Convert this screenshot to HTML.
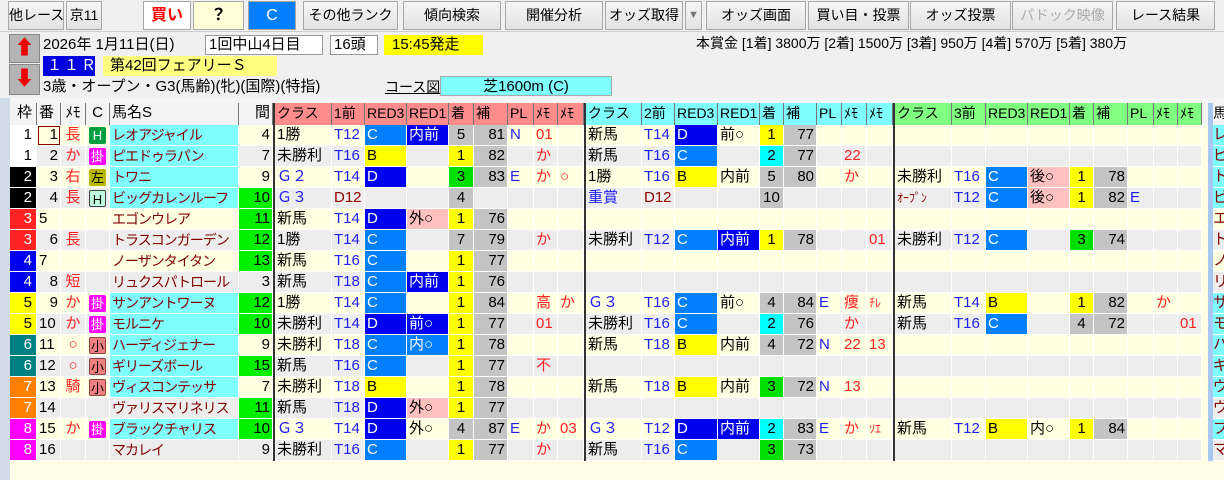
<!DOCTYPE html>
<html><head><meta charset="utf-8">
<style>
*{box-sizing:border-box;margin:0;padding:0}
body{width:1224px;height:480px;overflow:hidden;background:#f0f0f0;font-family:"Liberation Sans","Noto Sans CJK JP",sans-serif;position:relative;color:#000}
.btn{position:absolute;top:1px;height:29px;background:linear-gradient(#f6f6f6,#e2e2e2);border:1px solid #a8a8a8;font-size:14px;line-height:27px;text-align:center;white-space:nowrap}
.ab{position:absolute;white-space:nowrap}
.bx{position:absolute;height:20px;font-size:15px;line-height:20px;white-space:nowrap}
#strip{position:absolute;left:0;top:98px;width:10px;height:382px;background:#d2dce8}
#tbl{position:absolute;left:10px;top:98px;width:1214px;height:382px;background:#fffde4}
.r{display:flex;height:21px;font-size:15px;line-height:20px}
.r i{font-style:normal;display:block;height:21px;border-right:1px solid #fff;border-bottom:1px solid #fff;overflow:hidden;white-space:nowrap;padding:0 2px}
.o{background:#ffffe2}.e{background:#ededed}
.h{height:27px;padding-top:5px;background:#f4f4f4}
.h i{border-right:1px solid #777;border-bottom:none;height:22px}
.r i:nth-child(1){width:27px;text-align:right;padding-right:4px}
.r i:nth-child(2){width:24px;text-align:right}
.r i:nth-child(3){width:25px;color:#f22;text-align:center}
.r i:nth-child(4){width:24px;text-align:center}
.r i:nth-child(5){width:129px;color:#800000;font-size:14px;letter-spacing:-1px}
.r i:nth-child(6){width:34px;text-align:right}
.r i:nth-child(7),.r i:nth-child(17),.r i:nth-child(27){width:2px;background:#333;border:none;padding:0}
.r i:nth-child(8){width:57px}.r i:nth-child(9){width:33px}.r i:nth-child(10){width:42px}.r i:nth-child(11){width:42px}
.r i:nth-child(12){width:25px;text-align:center}.r i:nth-child(13){width:34px;text-align:right}.r i:nth-child(14){width:26px}
.r i:nth-child(15){width:24px;color:#f22}.r i:nth-child(16){width:26px;color:#f22}
.r i:nth-child(18){width:56px}.r i:nth-child(19){width:33px}.r i:nth-child(20){width:43px}.r i:nth-child(21){width:42px}
.r i:nth-child(22){width:24px;text-align:center}.r i:nth-child(23){width:33px;text-align:right}.r i:nth-child(24){width:25px}
.r i:nth-child(25){width:25px;color:#f22}.r i:nth-child(26){width:26px;color:#f22}
.r i:nth-child(28){width:57px}.r i:nth-child(29){width:34px}.r i:nth-child(30){width:42px}.r i:nth-child(31){width:42px}
.r i:nth-child(32){width:24px;text-align:center}.r i:nth-child(33){width:34px;text-align:right}.r i:nth-child(34){width:26px}
.r i:nth-child(35){width:24px;color:#f22}.r i:nth-child(36){width:24px;color:#f22}
.r i:nth-child(37){width:6px;border:none;background:#fffde4;padding:0}
.r i:nth-child(38){width:5px;border:none;background:#a8c8f0;padding:0}
.r i:nth-child(39){width:11px;color:#800000;border-right:none;padding:0}
.h i:nth-child(37){background:#f4f4f4}
.h i:nth-child(n+8):nth-child(-n+16){background:#ff8c8c}
.h i:nth-child(n+18):nth-child(-n+26){background:#80ffff}
.h i:nth-child(n+28):nth-child(-n+36){background:#80ff80}
.h i:nth-child(n+8){text-align:left!important;color:#000!important;font-size:14px}
.h i:nth-child(3){color:#000}
.h i:nth-child(5){color:#000;font-size:15px;letter-spacing:0}
.h i:nth-child(6){text-align:right}
.h i:nth-child(39){background:#f4f4f4;color:#000}
.r .nm{background:#80ffff}
.r .g{background:#00f000}
.r .c{background:#0080ff;color:#fff}
.r .d{background:#0000f0;color:#fff}
.r .bb{background:#ffff00}
.r .nb{background:#0000f0;color:#fff}
.r .lb{background:#0080ff;color:#fff}
.r .pk{background:#ffc0c0}
.r .y{background:#ffff00}
.r .cy{background:#00ffff}
.r .gn{background:#00e000}
.r .gy{background:#c4c4c4}
.b{color:#2020f0}.m{color:#900000!important}.rd{color:#f22}
.w1{background:#fff}.w2{background:#000;color:#fff}.w3{background:#f22;color:#fff}.w4{background:#0000f0;color:#fff}.w5{background:#ffff00}.w6{background:#008080;color:#fff}.w7{background:#ff8000;color:#fff}.w8{background:#f0f;color:#fff}
.t{display:inline-block;width:17px;height:17px;line-height:17px;font-size:13px;margin-top:2px;border-radius:2px}
.tH{background:#00a040;color:#fff}.tK{background:#f0f;color:#fff}.tL{background:#b8b800}.tH2{background:#c0ffe0;border:1px solid #444}.tS{background:#f08080;border:1px solid #844}
</style></head><body>
<div class="btn" style="left:8px;width:56px">他レース</div>
<div class="btn" style="left:66px;width:36px">京11</div>
<div class="btn" style="left:143px;width:48px;background:#fff;color:#f00;font-weight:bold;font-size:16px">買い</div>
<div class="btn" style="left:193px;width:51px;background:#ffffd8;font-weight:bold;font-size:16px">？</div>
<div class="btn" style="left:248px;width:48px;background:#0080ff;color:#fff;font-size:16px">C</div>
<div class="btn" style="left:303px;width:95px">その他ランク</div>
<div class="btn" style="left:403px;width:98px">傾向検索</div>
<div class="btn" style="left:505px;width:98px">開催分析</div>
<div class="btn" style="left:605px;width:78px">オッズ取得</div>
<div class="btn" style="left:685px;width:17px;color:#777;font-size:11px">▼</div>
<div class="btn" style="left:706px;width:100px">オッズ画面</div>
<div class="btn" style="left:808px;width:101px">買い目・投票</div>
<div class="btn" style="left:910px;width:101px">オッズ投票</div>
<div class="btn" style="left:1012px;width:101px;color:#aaa">パドック映像</div>
<div class="btn" style="left:1116px;width:99px">レース結果</div>
<div class="ab" style="left:0;top:31px;width:1224px;height:1px;background:#ccc"></div>
<div class="ab" style="left:9px;top:34px;width:31px;height:29px;background:#b4b4b4;border:1px solid #888;color:#e00;text-align:center;font-size:20px;line-height:27px">⬆</div>
<div class="ab" style="left:9px;top:64px;width:31px;height:31px;background:#b4b4b4;border:1px solid #888;color:#e00;text-align:center;font-size:20px;line-height:29px">⬇</div>
<div class="bx" style="left:43px;top:35px">2026年 1月11日(日)</div>
<div class="bx" style="left:205px;top:35px;width:118px;background:#fff;border:1px solid #999;padding-left:3px;line-height:18px">1回中山4日目</div>
<div class="bx" style="left:330px;top:35px;width:48px;background:#fff;border:1px solid #999;padding-left:3px;line-height:18px">16頭</div>
<div class="bx" style="left:384px;top:35px;width:99px;background:#ffff00;padding-left:8px">15:45発走</div>
<div class="bx" style="left:43px;top:56px;width:52px;background:#0000e0;color:#fff;padding-left:4px;letter-spacing:2px">１１Ｒ</div>
<div class="bx" style="left:103px;top:56px;width:174px;background:#ffff80;padding-left:7px">第42回フェアリーＳ</div>
<div class="bx" style="left:43px;top:77px">3歳・オープン・G3(馬齢)(牝)(国際)(特指)</div>
<div class="bx" style="left:385px;top:77px;font-size:14px;text-decoration:underline">コース図</div>
<div class="bx" style="left:440px;top:76px;width:172px;background:#80ffff;border:1px solid #aaa;text-align:center">芝1600m (C)</div>
<div class="bx" style="left:696px;top:33px;font-size:14px">本賞金 [1着] 3800万 [2着] 1500万 [3着] 950万 [4着] 570万 [5着] 380万</div>
<div id="strip"></div>
<div id="tbl">
<div class="r h"><i>枠</i><i style="text-align:left">番</i><i>ﾒﾓ</i><i>C</i><i>馬名S</i><i>間</i><i></i><i>クラス</i><i>1前</i><i>RED3</i><i>RED1</i><i>着</i><i>補</i><i>PL</i><i>ﾒﾓ</i><i>ﾒﾓ</i><i></i><i>クラス</i><i>2前</i><i>RED3</i><i>RED1</i><i>着</i><i>補</i><i>PL</i><i>ﾒﾓ</i><i>ﾒﾓ</i><i></i><i>クラス</i><i>3前</i><i>RED3</i><i>RED1</i><i>着</i><i>補</i><i>PL</i><i>ﾒﾓ</i><i>ﾒﾓ</i><i></i><i></i><i>馬</i></div>
<div class="r o"><i class="w1">1</i><i style="outline:1px solid #800;outline-offset:-2px">1</i><i>長</i><i><span class="t tH">H</span></i><i class="nm">レオアジャイル</i><i>4</i><i></i><i>1勝</i><i class="b">T12</i><i class="c">C</i><i class="nb">内前</i><i class="gy">5</i><i class="gy">81</i><i class="b">N</i><i>01</i><i></i><i></i><i>新馬</i><i class="b">T14</i><i class="d">D</i><i>前○</i><i class="y">1</i><i class="gy">77</i><i></i><i></i><i></i><i></i><i></i><i></i><i></i><i></i><i></i><i></i><i></i><i></i><i></i><i></i><i></i><i class="nm">レ</i></div>
<div class="r e"><i class="w1">1</i><i>2</i><i>か</i><i><span class="t tK">掛</span></i><i class="nm">ピエドゥラパン</i><i>7</i><i></i><i>未勝利</i><i class="b">T16</i><i class="bb">B</i><i></i><i class="y">1</i><i class="gy">82</i><i></i><i>か</i><i></i><i></i><i>新馬</i><i class="b">T16</i><i class="c">C</i><i></i><i class="cy">2</i><i class="gy">77</i><i></i><i>22</i><i></i><i></i><i></i><i></i><i></i><i></i><i></i><i></i><i></i><i></i><i></i><i></i><i></i><i class="nm">ピ</i></div>
<div class="r o"><i class="w2">2</i><i>3</i><i>右</i><i><span class="t tL">左</span></i><i class="nm">トワニ</i><i>9</i><i></i><i class="b">Ｇ２</i><i class="b">T14</i><i class="d">D</i><i></i><i class="gn">3</i><i class="gy">83</i><i class="b">E</i><i>か</i><i>○</i><i></i><i>1勝</i><i class="b">T16</i><i class="bb">B</i><i>内前</i><i class="gy">5</i><i class="gy">80</i><i></i><i>か</i><i></i><i></i><i>未勝利</i><i class="b">T16</i><i class="c">C</i><i class="pk">後○</i><i class="y">1</i><i class="gy">78</i><i></i><i></i><i></i><i></i><i></i><i class="nm">ト</i></div>
<div class="r e"><i class="w2">2</i><i>4</i><i>長</i><i><span class="t tH2">H</span></i><i class="nm">ビッグカレンルーフ</i><i class="g">10</i><i></i><i class="b">Ｇ３</i><i class="m">D12</i><i></i><i></i><i class="gy">4</i><i></i><i></i><i></i><i></i><i></i><i class="b">重賞</i><i class="m">D12</i><i></i><i></i><i class="gy">10</i><i></i><i></i><i></i><i></i><i></i><i class="m" style="font-size:12px">ｵｰﾌﾟﾝ</i><i class="b">T12</i><i class="c">C</i><i class="pk">後○</i><i class="y">1</i><i class="gy">82</i><i class="b">E</i><i></i><i></i><i></i><i></i><i class="nm">ビ</i></div>
<div class="r o"><i class="w3">3</i><i style="text-align:left">5</i><i></i><i></i><i>エゴンウレア</i><i class="g">11</i><i></i><i>新馬</i><i class="b">T14</i><i class="d">D</i><i class="pk">外○</i><i class="y">1</i><i class="gy">76</i><i></i><i></i><i></i><i></i><i></i><i></i><i></i><i></i><i></i><i></i><i></i><i></i><i></i><i></i><i></i><i></i><i></i><i></i><i></i><i></i><i></i><i></i><i></i><i></i><i></i><i>エ</i></div>
<div class="r e"><i class="w3">3</i><i>6</i><i>長</i><i></i><i>トラスコンガーデン</i><i class="g">12</i><i></i><i>1勝</i><i class="b">T14</i><i class="c">C</i><i></i><i class="gy">7</i><i class="gy">79</i><i></i><i>か</i><i></i><i></i><i>未勝利</i><i class="b">T12</i><i class="c">C</i><i class="nb">内前</i><i class="y">1</i><i class="gy">78</i><i></i><i></i><i>01</i><i></i><i>未勝利</i><i class="b">T12</i><i class="c">C</i><i></i><i class="gn">3</i><i class="gy">74</i><i></i><i></i><i></i><i></i><i></i><i>ト</i></div>
<div class="r o"><i class="w4">4</i><i style="text-align:left">7</i><i></i><i></i><i>ノーザンタイタン</i><i class="g">13</i><i></i><i>新馬</i><i class="b">T16</i><i class="c">C</i><i></i><i class="y">1</i><i class="gy">77</i><i></i><i></i><i></i><i></i><i></i><i></i><i></i><i></i><i></i><i></i><i></i><i></i><i></i><i></i><i></i><i></i><i></i><i></i><i></i><i></i><i></i><i></i><i></i><i></i><i></i><i>ノ</i></div>
<div class="r e"><i class="w4">4</i><i>8</i><i>短</i><i></i><i>リュクスパトロール</i><i>3</i><i></i><i>新馬</i><i class="b">T18</i><i class="c">C</i><i class="nb">内前</i><i class="y">1</i><i class="gy">76</i><i></i><i></i><i></i><i></i><i></i><i></i><i></i><i></i><i></i><i></i><i></i><i></i><i></i><i></i><i></i><i></i><i></i><i></i><i></i><i></i><i></i><i></i><i></i><i></i><i></i><i>リ</i></div>
<div class="r o"><i class="w5">5</i><i>9</i><i>か</i><i><span class="t tK">掛</span></i><i class="nm">サンアントワーヌ</i><i class="g">12</i><i></i><i>1勝</i><i class="b">T14</i><i class="c">C</i><i></i><i class="y">1</i><i class="gy">84</i><i></i><i>高</i><i>か</i><i></i><i class="b">Ｇ３</i><i class="b">T16</i><i class="c">C</i><i>前○</i><i class="gy">4</i><i class="gy">84</i><i class="b">E</i><i>痩</i><i style="font-size:12px">ﾁﾚ</i><i></i><i>新馬</i><i class="b">T14</i><i class="bb">B</i><i></i><i class="y">1</i><i class="gy">82</i><i></i><i>か</i><i></i><i></i><i></i><i class="nm">サ</i></div>
<div class="r e"><i class="w5">5</i><i style="text-align:left">10</i><i>か</i><i><span class="t tK">掛</span></i><i class="nm">モルニケ</i><i class="g">10</i><i></i><i>未勝利</i><i class="b">T14</i><i class="d">D</i><i class="nb">前○</i><i class="y">1</i><i class="gy">77</i><i></i><i>01</i><i></i><i></i><i>未勝利</i><i class="b">T16</i><i class="c">C</i><i></i><i class="cy">2</i><i class="gy">76</i><i></i><i>か</i><i></i><i></i><i>新馬</i><i class="b">T16</i><i class="c">C</i><i></i><i class="gy">4</i><i class="gy">72</i><i></i><i></i><i>01</i><i></i><i></i><i class="nm">モ</i></div>
<div class="r o"><i class="w6">6</i><i style="text-align:left">11</i><i>○</i><i><span class="t tS">小</span></i><i class="nm">ハーディジェナー</i><i>9</i><i></i><i>未勝利</i><i class="b">T18</i><i class="c">C</i><i class="lb">内○</i><i class="y">1</i><i class="gy">78</i><i></i><i></i><i></i><i></i><i>新馬</i><i class="b">T18</i><i class="bb">B</i><i>内前</i><i class="gy">4</i><i class="gy">72</i><i class="b">N</i><i>22</i><i>13</i><i></i><i></i><i></i><i></i><i></i><i></i><i></i><i></i><i></i><i></i><i></i><i></i><i class="nm">ハ</i></div>
<div class="r e"><i class="w6">6</i><i style="text-align:left">12</i><i>○</i><i><span class="t tS">小</span></i><i class="nm">ギリーズボール</i><i class="g">15</i><i></i><i>新馬</i><i class="b">T16</i><i class="c">C</i><i></i><i class="y">1</i><i class="gy">77</i><i></i><i>不</i><i></i><i></i><i></i><i></i><i></i><i></i><i></i><i></i><i></i><i></i><i></i><i></i><i></i><i></i><i></i><i></i><i></i><i></i><i></i><i></i><i></i><i></i><i></i><i class="nm">ギ</i></div>
<div class="r o"><i class="w7">7</i><i style="text-align:left">13</i><i>騎</i><i><span class="t tS">小</span></i><i class="nm">ヴィスコンテッサ</i><i>7</i><i></i><i>未勝利</i><i class="b">T18</i><i class="bb">B</i><i></i><i class="y">1</i><i class="gy">78</i><i></i><i></i><i></i><i></i><i>新馬</i><i class="b">T18</i><i class="bb">B</i><i>内前</i><i class="gn">3</i><i class="gy">72</i><i class="b">N</i><i>13</i><i></i><i></i><i></i><i></i><i></i><i></i><i></i><i></i><i></i><i></i><i></i><i></i><i></i><i class="nm">ヴ</i></div>
<div class="r e"><i class="w7">7</i><i style="text-align:left">14</i><i></i><i></i><i>ヴァリスマリネリス</i><i class="g">11</i><i></i><i>新馬</i><i class="b">T18</i><i class="d">D</i><i class="pk">外○</i><i class="y">1</i><i class="gy">77</i><i></i><i></i><i></i><i></i><i></i><i></i><i></i><i></i><i></i><i></i><i></i><i></i><i></i><i></i><i></i><i></i><i></i><i></i><i></i><i></i><i></i><i></i><i></i><i></i><i></i><i>ヴ</i></div>
<div class="r o"><i class="w8">8</i><i style="text-align:left">15</i><i>か</i><i><span class="t tK">掛</span></i><i class="nm">ブラックチャリス</i><i class="g">10</i><i></i><i class="b">Ｇ３</i><i class="b">T14</i><i class="d">D</i><i>外○</i><i class="gy">4</i><i class="gy">87</i><i class="b">E</i><i>か</i><i>03</i><i></i><i class="b">Ｇ３</i><i class="b">T12</i><i class="d">D</i><i class="nb">内前</i><i class="cy">2</i><i class="gy">83</i><i class="b">E</i><i>か</i><i style="font-size:12px">ｿｴ</i><i></i><i>新馬</i><i class="b">T12</i><i class="bb">B</i><i>内○</i><i class="y">1</i><i class="gy">84</i><i></i><i></i><i></i><i></i><i></i><i class="nm">ブ</i></div>
<div class="r e"><i class="w8">8</i><i style="text-align:left">16</i><i></i><i></i><i>マカレイ</i><i>9</i><i></i><i>未勝利</i><i class="b">T16</i><i class="c">C</i><i></i><i class="y">1</i><i class="gy">77</i><i></i><i>か</i><i></i><i></i><i>新馬</i><i class="b">T16</i><i class="c">C</i><i></i><i class="gn">3</i><i class="gy">73</i><i></i><i></i><i></i><i></i><i></i><i></i><i></i><i></i><i></i><i></i><i></i><i></i><i></i><i></i><i></i><i>マ</i></div>
</div>
</body></html>
